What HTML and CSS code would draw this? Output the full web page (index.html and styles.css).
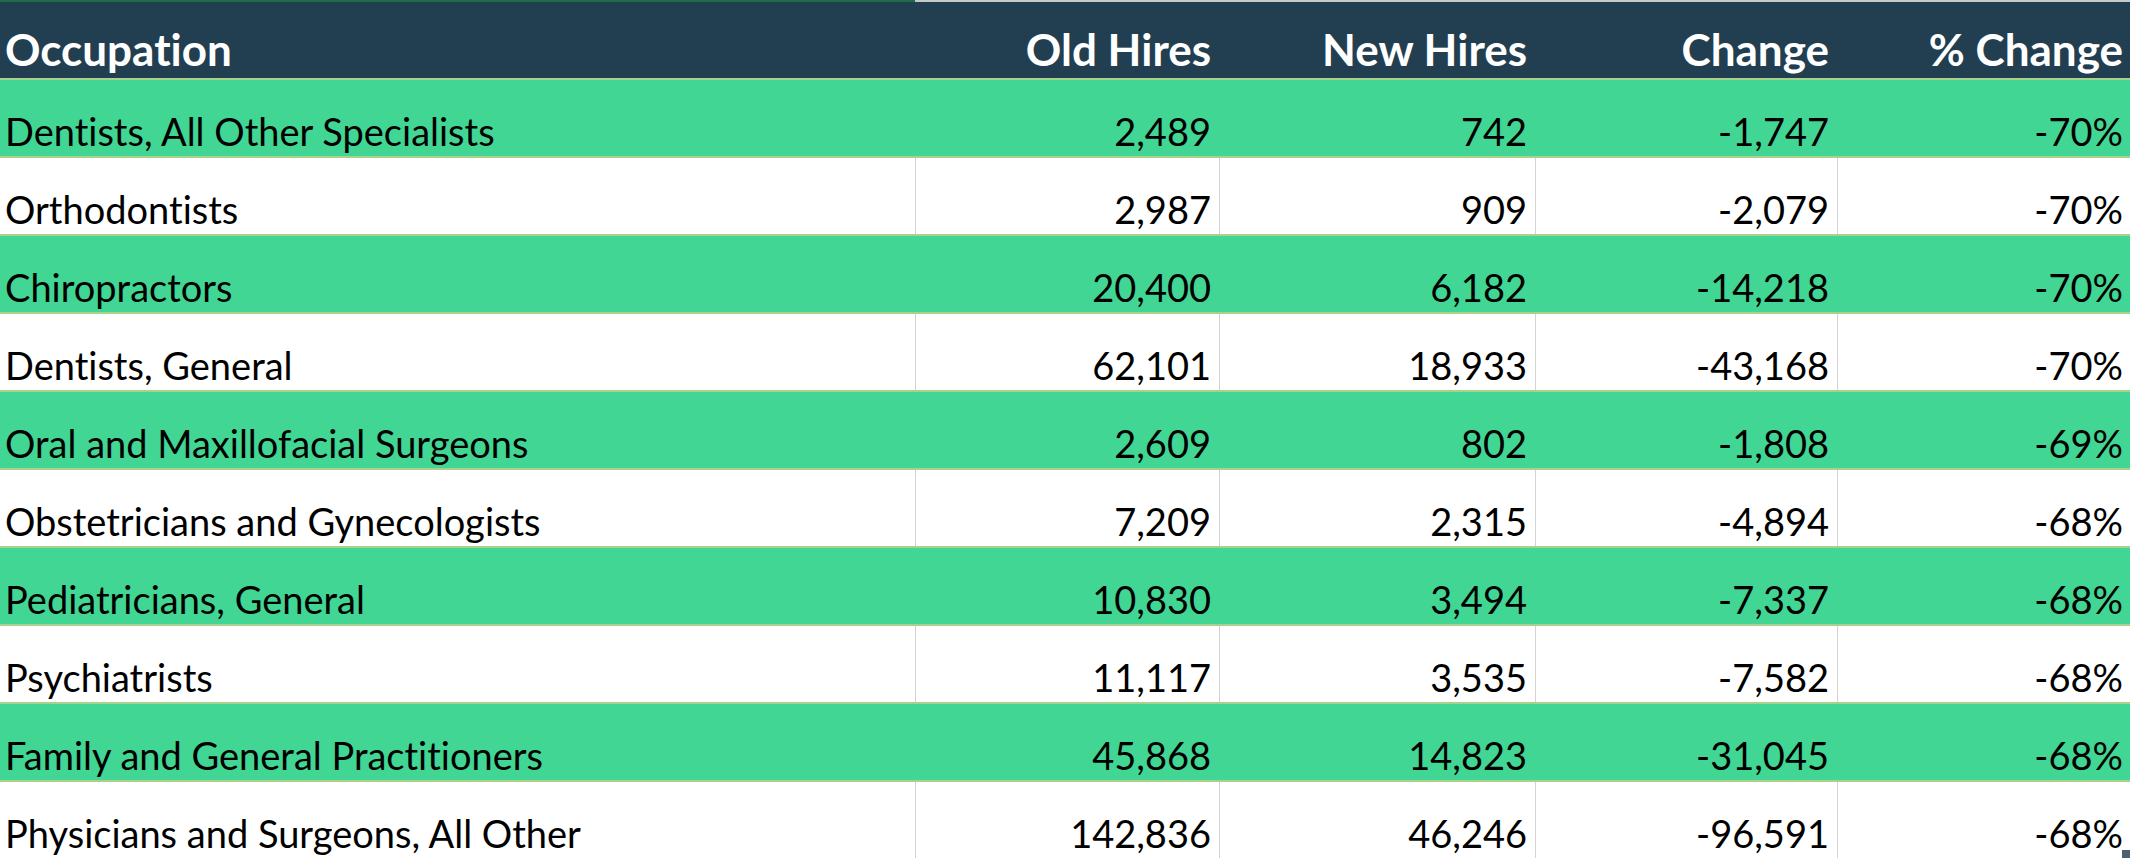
FILE: index.html
```html
<!DOCTYPE html>
<html lang="en">
<head>
<meta charset="utf-8">
<title>Occupation Hires</title>
<link rel="stylesheet" href="styles.css">
</head>
<body>
<div class="sheet">
  <div class="topline"><span class="sel"></span><span class="rest"></span></div>
  <div class="row head">
    <div class="cell left">Occupation</div>
    <div class="cell">Old Hires</div>
    <div class="cell">New Hires</div>
    <div class="cell">Change</div>
    <div class="cell">% Change</div>
  </div>
  <div class="row green">
    <div class="cell left">Dentists, All Other Specialists</div>
    <div class="cell">2,489</div><div class="cell">742</div><div class="cell">-1,747</div><div class="cell">-70%</div>
  </div>
  <div class="row white">
    <div class="cell left">Orthodontists</div>
    <div class="cell">2,987</div><div class="cell">909</div><div class="cell">-2,079</div><div class="cell">-70%</div>
  </div>
  <div class="row green">
    <div class="cell left">Chiropractors</div>
    <div class="cell">20,400</div><div class="cell">6,182</div><div class="cell">-14,218</div><div class="cell">-70%</div>
  </div>
  <div class="row white">
    <div class="cell left">Dentists, General</div>
    <div class="cell">62,101</div><div class="cell">18,933</div><div class="cell">-43,168</div><div class="cell">-70%</div>
  </div>
  <div class="row green">
    <div class="cell left">Oral and Maxillofacial Surgeons</div>
    <div class="cell">2,609</div><div class="cell">802</div><div class="cell">-1,808</div><div class="cell">-69%</div>
  </div>
  <div class="row white">
    <div class="cell left">Obstetricians and Gynecologists</div>
    <div class="cell">7,209</div><div class="cell">2,315</div><div class="cell">-4,894</div><div class="cell">-68%</div>
  </div>
  <div class="row green">
    <div class="cell left">Pediatricians, General</div>
    <div class="cell">10,830</div><div class="cell">3,494</div><div class="cell">-7,337</div><div class="cell">-68%</div>
  </div>
  <div class="row white">
    <div class="cell left">Psychiatrists</div>
    <div class="cell">11,117</div><div class="cell">3,535</div><div class="cell">-7,582</div><div class="cell">-68%</div>
  </div>
  <div class="row green">
    <div class="cell left">Family and General Practitioners</div>
    <div class="cell">45,868</div><div class="cell">14,823</div><div class="cell">-31,045</div><div class="cell">-68%</div>
  </div>
  <div class="row white last">
    <div class="cell left">Physicians and Surgeons, All Other</div>
    <div class="cell">142,836</div><div class="cell">46,246</div><div class="cell">-96,591</div><div class="cell">-68%</div>
  </div>
  <span class="handle"></span>
</div>
</body>
</html>
```
FILE: styles.css
```css
html, body {
  margin: 0;
  padding: 0;
  background: #ffffff;
}
.sheet {
  position: relative;
  width: 2130px;
  height: 858px;
  overflow: hidden;
  font-family: Lato, "Open Sans", sans-serif;
  font-size: 38px;
  font-variant-ligatures: none;
  color: #000000;
}
.topline {
  display: grid;
  grid-template-columns: 915px 1fr;
  height: 2px;
}
.topline .sel { background: #1f6e43; }
.topline .rest { background: #c8c8c8; }
.row {
  display: grid;
  grid-template-columns: 915px 304px 316px 302px 293px;
  height: 76px;
  border-bottom: 2px solid #a9d18e;
}
.row.last { border-bottom: none; }
.head {
  background: #223f51;
  color: #ffffff;
  font-weight: 700;
  font-size: 44px;
}
.green { background: #41d693; }
.white { background: #ffffff; }
.cell {
  display: flex;
  align-items: flex-end;
  justify-content: flex-end;
  line-height: 1;
  padding: 0 8px 6px 0;
  white-space: nowrap;
}
.cell.left {
  justify-content: flex-start;
  padding-left: 5px;
}
.head .cell { padding-bottom: 7px; }
.white .cell + .cell { border-left: 1px solid #d4d4d4; }
.row > .cell:last-child { padding-right: 7px; }
.handle {
  position: absolute;
  right: 0;
  bottom: 0;
  width: 8px;
  height: 8px;
  background: #4b6070;
  border-top: 1px solid #ffffff;
  border-left: 1px solid #ffffff;
}
```
